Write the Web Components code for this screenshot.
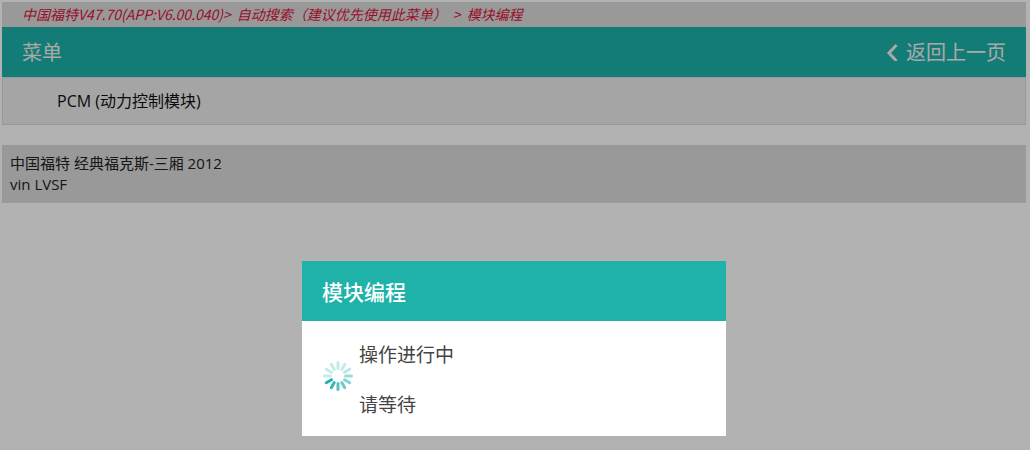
<!DOCTYPE html>
<html lang="zh-CN">
<head>
<meta charset="utf-8">
<title>模块编程</title>
<style>
  html, body { margin: 0; min-height: 100vh; background: #fff; }
  body { font-family: "Noto Sans CJK SC", "Noto Sans", sans-serif; color: #222; }
</style>
</head>
<body>
<diag-app></diag-app>

<script>
const define = (name, html, setup) => {
  const template = document.createElement("template");
  template.innerHTML = html;
  customElements.define(name, class extends HTMLElement {
    constructor() {
      super();
      this.attachShadow({ mode: "open" }).append(template.content.cloneNode(true));
      if (setup) setup(this.shadowRoot);
    }
  });
};

define("crumb-trail", `
  <style>
    :host { display: block; background: #dbdbdb; color: crimson; padding: 0 20px;
      font-size: 14px; line-height: 25px; font-style: italic; }
    nav { display: flex; gap: 6px; }
  </style>
  <nav aria-label="路径"><slot></slot></nav>`);

define("menu-bar", `
  <style>
    :host { display: flex; justify-content: space-between; align-items: center;
      min-height: 50px; padding: 0 20px; background: #1eb2a9; color: #f2f2f2;
      font-size: 20px; line-height: 30px; }
    h1 { margin: 0; font: inherit; }
    a { display: flex; align-items: center; gap: 8px; color: inherit; text-decoration: none; }
    svg { display: block; }
  </style>
  <h1><slot></slot></h1>
  <a href="#">
    <svg width="12" height="18" viewBox="0 0 12 18" fill="none" stroke="currentColor" stroke-width="3" aria-hidden="true"><path d="M10.5 2 3 10 10.5 18"/></svg>
    <slot name="back"></slot>
  </a>`);

define("module-item", `
  <style>
    :host { display: block; }
    button { display: block; box-sizing: border-box; width: 100%; margin: 0;
      border: 1px solid #dadada; background: #ececec; color: #111; text-align: left;
      padding: 11px 54px; font-family: "Open Sans", "Noto Sans CJK SC", sans-serif;
      font-size: 16px; line-height: 24px; }
  </style>
  <button type="button"><slot></slot></button>`);

define("vehicle-info", `
  <style>
    :host { display: block; background: #dbdbdb; padding: 8px; margin-top: 20px;
      font-family: "Open Sans", "Noto Sans CJK SC", sans-serif;
      font-size: 15px; line-height: 21px; }
    ::slotted(p) { margin: 0; }
  </style>
  <slot></slot>`);

define("busy-spinner", `
  <style>
    :host { display: block; width: 30px; height: 30px; }
    svg { display: block; }
  </style>
  <svg width="30" height="30" viewBox="-15 -15 30 30" stroke="#1eb2a9" stroke-width="3" stroke-linecap="round" aria-hidden="true"></svg>`,
  root => {
    const strength = [.25, .25, .3, .45, .55, .65, .75, .9, 1, .25, .25, .25];
    root.querySelector("svg").innerHTML = strength.map((o, i) =>
      `<line y1="-7.5" y2="-13.5" opacity="${o}" transform="rotate(${i * 30})"/>`).join("");
  });

define("progress-dialog", `
  <style>
    :host { display: block; width: 424px; max-width: 100%; background: #fff; color: #444; }
    h2 { margin: 0; padding: 15px 20px; background: #1eb2a9; color: #fff;
      font-size: 21px; line-height: 30px; font-weight: 500; }
    .body { display: flex; align-items: flex-start; gap: 6px; padding: 18px 21px 17px; }
    busy-spinner { margin-top: 22px; }
    .text { display: grid; gap: 20px; font-size: 19px; line-height: 30px; }
    ::slotted(p) { margin: 0; }
  </style>
  <section role="dialog" aria-labelledby="title">
    <h2 id="title"><slot name="title"></slot></h2>
    <div class="body"><busy-spinner></busy-spinner><div class="text"><slot></slot></div></div>
  </section>`);

define("diag-app", `
  <style>
    :host { display: block; }
    main { padding: 2px 4px 0 2px; }
    .shade { position: fixed; inset: 0; display: flex; justify-content: center;
      align-items: flex-end; padding: 0 2px 14px 0; background: rgba(0, 0, 0, .3); }
    p { margin: 0; }
  </style>
  <main>
    <crumb-trail><span>中国福特V47.70(APP:V6.00.040)&gt;</span> <span>自动搜索（建议优先使用此菜单）</span> <span>&gt;</span> <span>模块编程</span></crumb-trail>
    <menu-bar>菜单<span slot="back">返回上一页</span></menu-bar>
    <module-item>PCM (动力控制模块)</module-item>
    <vehicle-info><p>中国福特 经典福克斯-三厢 2012</p><p>vin LVSF</p></vehicle-info>
  </main>
  <div class="shade">
    <progress-dialog><span slot="title">模块编程</span><p>操作进行中</p><p>请等待</p></progress-dialog>
  </div>`);
</script>
</body>
</html>
